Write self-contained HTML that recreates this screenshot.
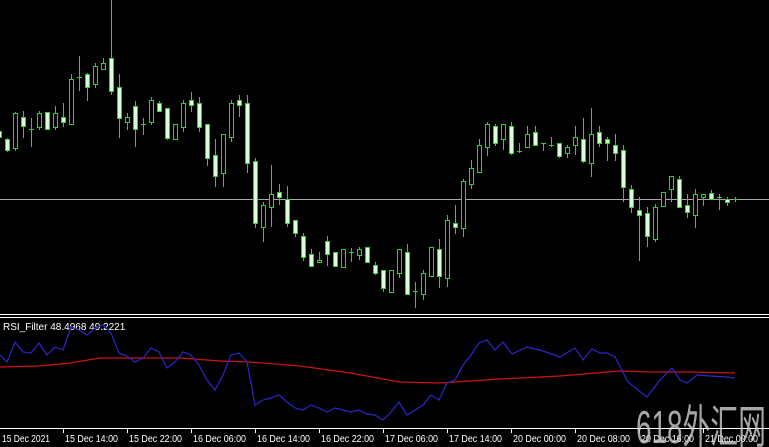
<!DOCTYPE html>
<html><head><meta charset="utf-8"><style>
html,body{margin:0;padding:0;background:#000;width:769px;height:447px;overflow:hidden}
svg{display:block}
text{font-family:"Liberation Sans",sans-serif}
</style></head><body>
<svg id="s" width="769" height="447" xmlns="http://www.w3.org/2000/svg">
<rect width="769" height="447" fill="#000"/>
<line x1="0" y1="199.5" x2="769" y2="199.5" stroke="#a8a8a8" stroke-width="1"/>
<g id="c"></g>
<line x1="0" y1="314.5" x2="769" y2="314.5" stroke="#fff"/>
<line x1="0" y1="317.5" x2="769" y2="317.5" stroke="#fff"/>
<text x="3" y="330" fill="#fff" font-size="10">RSI_Filter 48.4968 49.2221</text>
<polyline id="red" fill="none" stroke="#d01010" stroke-width="1.2"/>
<polyline id="blue" fill="none" stroke="#2828c8" stroke-width="1.2"/>
<line x1="0" y1="428.5" x2="769" y2="428.5" stroke="#fff"/>
<g id="ax" fill="#fff" font-size="10"></g>
<text x="636" y="443" fill="#cfcfcf" fill-opacity="0.8" font-size="46" font-family="Liberation Sans, Noto Sans CJK SC, sans-serif" textLength="130" lengthAdjust="spacingAndGlyphs">618外汇网</text>
</svg>
<script>
var D=[[131,137,131,137,1],[139,150,138,152,1],[113,148,112,151,0],[117,126,111,138,1],[129,129,118,147,2],[113,127,111,130,0],[112,129,112,129,1],[113,127,106,130,0],[117,122,103,127,1],[79,124,74,125,0],[77,77,56,91,2],[74,87,73,101,1],[66,84,63,88,0],[63,69,58,69,0],[58,91,0,95,1],[87,118,74,138,1],[117,122,113,130,0],[106,129,101,147,1],[124,124,118,135,2],[100,122,97,125,0],[103,111,101,112,1],[108,138,108,140,1],[124,139,124,139,0],[103,127,100,132,0],[100,105,92,112,1],[103,127,97,132,1],[124,158,124,166,1],[155,176,139,187,1],[134,173,134,187,0],[103,137,100,142,0],[100,105,95,117,1],[103,163,95,173,1],[161,223,158,228,1],[205,227,202,242,0],[194,207,165,227,0],[192,197,184,205,1],[199,223,186,227,1],[220,233,220,237,1],[236,257,233,261,1],[254,266,249,267,1],[260,262,252,262,0],[241,254,236,266,1],[252,266,252,266,1],[249,267,249,267,0],[252,252,248,262,2],[249,255,247,260,0],[247,262,247,262,1],[265,273,262,275,1],[270,288,270,292,1],[270,292,270,292,0],[249,273,249,278,0],[252,294,244,294,1],[291,291,282,308,2],[273,294,270,300,0],[247,276,247,276,0],[249,276,239,288,1],[220,278,215,287,0],[223,227,205,234,1],[181,228,179,237,0],[168,184,160,189,0],[145,172,139,172,0],[124,147,122,156,0],[126,143,124,146,1],[124,139,124,150,0],[126,153,122,155,1],[151,151,143,153,2],[134,147,126,148,0],[132,145,126,146,1],[143,143,143,151,2],[145,145,137,147,2],[143,156,143,158,1],[147,153,145,158,0],[137,145,126,155,0],[139,161,118,163,1],[134,163,108,177,0],[132,143,126,147,1],[139,143,137,161,1],[145,153,134,161,1],[150,187,145,202,1],[189,207,185,213,1],[210,215,197,261,1],[213,236,207,247,1],[207,239,204,242,0],[192,206,192,207,0],[176,189,176,202,0],[179,207,176,207,1],[205,212,194,218,1],[194,215,189,228,0],[194,197,194,206,0],[193,199,190,199,1],[197,197,194,210,2],[199,202,197,206,1],[199,199,197,202,2]];
var h='';
D.forEach(function(d,k){var x=8*k-1;
h+='<line x1="'+(x+.5)+'" y1="'+d[2]+'" x2="'+(x+.5)+'" y2="'+d[3]+'" stroke="#22d822"/>';
if(d[4]==2){h+='<line x1="'+(x-2)+'" y1="'+(d[0]+.5)+'" x2="'+(x+3)+'" y2="'+(d[0]+.5)+'" stroke="#22d822"/>';}
else{var hh=Math.max(d[1]-d[0],2);h+='<rect x="'+(x-1.5)+'" y="'+(d[0]+.5)+'" width="4" height="'+hh+'" fill="'+(d[4]?'#d8ffd8':'#000')+'" stroke="#22d822"/>';}
});
document.getElementById('c').innerHTML=h;
var B=[[0,355],[7,362],[15,342],[23,352],[31,353],[39,343],[47,355],[55,347],[63,350],[71,327],[79,330],[87,335],[95,328],[103,325],[111,333],[119,353],[127,356],[135,362],[143,358],[151,348],[159,352],[167,368],[175,362],[183,352],[191,355],[199,365],[207,380],[215,390],[223,375],[231,355],[239,353],[247,362],[255,405],[263,400],[271,398],[279,395],[287,402],[295,408],[303,410],[311,405],[319,408],[327,412],[335,408],[343,410],[351,412],[359,410],[367,414],[375,415],[383,420],[391,412],[399,402],[407,415],[415,410],[423,405],[431,395],[439,400],[447,383],[455,380],[463,365],[471,355],[479,343],[487,340],[495,350],[503,342],[512,354],[527,347],[543,351],[560,357],[575,348],[583,360],[592,349],[600,353],[607,353],[615,357],[628,382],[647,397],[660,380],[672,368],[680,380],[687,383],[697,375],[710,376],[727,377],[735,378]];
var R=[[0,367],[40,366],[70,363],[100,358],[130,358],[180,358],[220,361],[250,362],[300,366],[350,373],[400,382],[440,383],[470,381],[500,379],[560,376],[620,371],[650,372],[690,372],[735,373]];
function pts(a){return a.map(function(p){return p[0]+','+p[1]}).join(' ')}
document.getElementById('blue').setAttribute('points',pts(B));
document.getElementById('red').setAttribute('points',pts(R));
var L=['15 Dec 2021','15 Dec 14:00','15 Dec 22:00','16 Dec 06:00','16 Dec 14:00','16 Dec 22:00','17 Dec 06:00','17 Dec 14:00','20 Dec 00:00','20 Dec 08:00','20 Dec 16:00','21 Dec 00:00'];
var a='';L.forEach(function(t,i){var x=i==0?2:63+64*(i-1);
if(i>0)a+='<line x1="'+(x+.5)+'" y1="428" x2="'+(x+.5)+'" y2="433" stroke="#fff"/>';
a+='<text x="'+(i==0?2:x+2)+'" y="442" textLength="'+(i==0?48:53)+'" lengthAdjust="spacingAndGlyphs">'+t+'</text>';});
document.getElementById('ax').innerHTML=a;
</script>
</body></html>
